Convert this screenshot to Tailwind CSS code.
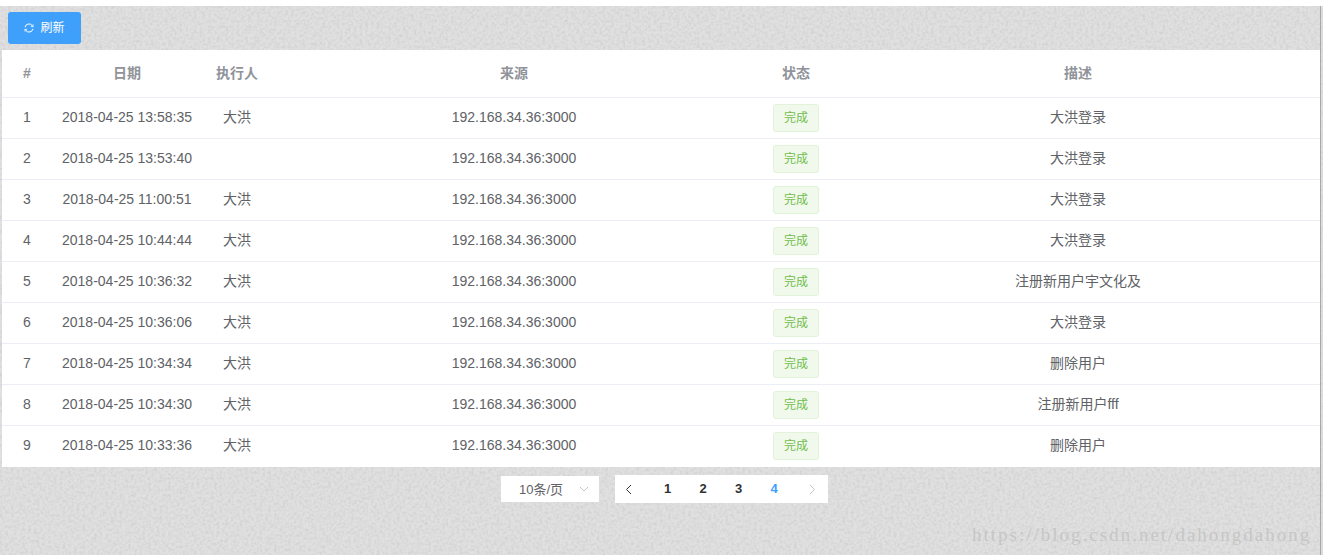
<!doctype html>
<html lang="zh">
    <head>
        <meta charset="UTF-8" />
        <title>操作日志</title>
        <script src="https://cdn.jsdelivr.net/npm/@tailwindcss/browser@4"></script>
    </head>
    <body class="bg-white font-['Liberation_Sans','Noto_Sans_CJK_SC',sans-serif]">
        <main class="relative mt-[6px] h-[549px] w-[1323px] overflow-hidden bg-[#e0e0e0]">
            <!-- paper texture -->
            <svg class="absolute inset-0" width="1323" height="549">
                <filter id="paper" x="0" y="0" width="100%" height="100%">
                    <feTurbulence type="fractalNoise" baseFrequency="0.35" numOctaves="4" seed="4" />
                    <feColorMatrix type="matrix" values="0 0 0 0 0.55  0 0 0 0 0.55  0 0 0 0 0.55  1.1 0 0 0 -0.42" />
                </filter>
                <rect width="1323" height="549" filter="url(#paper)" />
            </svg>

            <div class="relative">
                <div class="h-[44px] pl-2 pt-[6px]">
                    <button class="flex h-[32px] w-[73px] items-center justify-center gap-[6px] rounded-[3px] bg-[#3fa0fb] text-[12px] text-white">
                        <svg width="10" height="10" viewBox="0 0 10 10" fill="none" stroke="white" stroke-width="1">
                            <path d="M1 4.2A4 4 0 0 1 8.2 2.6L9 3.6M9 5.8A4 4 0 0 1 1.8 7.4L1 6.4" />
                            <path d="M9 1.4V3.6H6.9M1 8.6V6.4H3.1" stroke-width="0.8" />
                        </svg>
                        刷新
                    </button>
                </div>

                <table id="logs" class="ml-[2px] w-[1318px] table-fixed border-collapse bg-white text-center text-[14px] text-[#606266]">
                    <colgroup>
                        <col class="w-[50px]" />
                        <col class="w-[150px]" />
                        <col class="w-[70px]" />
                        <col class="w-[484px]" />
                        <col class="w-[80px]" />
                        <col />
                    </colgroup>
                    <thead class="text-[14px] font-bold text-[#909399]">
                        <tr class="h-[47px] border-b border-[#ebeef5]">
                            <th>#</th>
                            <th>日期</th>
                            <th>执行人</th>
                            <th>来源</th>
                            <th>状态</th>
                            <th>描述</th>
                        </tr>
                    </thead>
                    <tbody>
                        <tr class="h-[41px] border-b border-[#ebeef5]"><td>1</td><td>2018-04-25 13:58:35</td><td>大洪</td><td>192.168.34.36:3000</td><td><span class="mx-auto flex h-[28px] w-[46px] items-center justify-center rounded-[3px] border border-[#e1f3d8] bg-[#f0f9eb] text-[12px] text-[#72bd4b]">完成</span></td><td>大洪登录</td></tr>
                        <tr class="h-[41px] border-b border-[#ebeef5]"><td>2</td><td>2018-04-25 13:53:40</td><td></td><td>192.168.34.36:3000</td><td><span class="mx-auto flex h-[28px] w-[46px] items-center justify-center rounded-[3px] border border-[#e1f3d8] bg-[#f0f9eb] text-[12px] text-[#72bd4b]">完成</span></td><td>大洪登录</td></tr>
                        <tr class="h-[41px] border-b border-[#ebeef5]"><td>3</td><td>2018-04-25 11:00:51</td><td>大洪</td><td>192.168.34.36:3000</td><td><span class="mx-auto flex h-[28px] w-[46px] items-center justify-center rounded-[3px] border border-[#e1f3d8] bg-[#f0f9eb] text-[12px] text-[#72bd4b]">完成</span></td><td>大洪登录</td></tr>
                        <tr class="h-[41px] border-b border-[#ebeef5]"><td>4</td><td>2018-04-25 10:44:44</td><td>大洪</td><td>192.168.34.36:3000</td><td><span class="mx-auto flex h-[28px] w-[46px] items-center justify-center rounded-[3px] border border-[#e1f3d8] bg-[#f0f9eb] text-[12px] text-[#72bd4b]">完成</span></td><td>大洪登录</td></tr>
                        <tr class="h-[41px] border-b border-[#ebeef5]"><td>5</td><td>2018-04-25 10:36:32</td><td>大洪</td><td>192.168.34.36:3000</td><td><span class="mx-auto flex h-[28px] w-[46px] items-center justify-center rounded-[3px] border border-[#e1f3d8] bg-[#f0f9eb] text-[12px] text-[#72bd4b]">完成</span></td><td>注册新用户宇文化及</td></tr>
                        <tr class="h-[41px] border-b border-[#ebeef5]"><td>6</td><td>2018-04-25 10:36:06</td><td>大洪</td><td>192.168.34.36:3000</td><td><span class="mx-auto flex h-[28px] w-[46px] items-center justify-center rounded-[3px] border border-[#e1f3d8] bg-[#f0f9eb] text-[12px] text-[#72bd4b]">完成</span></td><td>大洪登录</td></tr>
                        <tr class="h-[41px] border-b border-[#ebeef5]"><td>7</td><td>2018-04-25 10:34:34</td><td>大洪</td><td>192.168.34.36:3000</td><td><span class="mx-auto flex h-[28px] w-[46px] items-center justify-center rounded-[3px] border border-[#e1f3d8] bg-[#f0f9eb] text-[12px] text-[#72bd4b]">完成</span></td><td>删除用户</td></tr>
                        <tr class="h-[41px] border-b border-[#ebeef5]"><td>8</td><td>2018-04-25 10:34:30</td><td>大洪</td><td>192.168.34.36:3000</td><td><span class="mx-auto flex h-[28px] w-[46px] items-center justify-center rounded-[3px] border border-[#e1f3d8] bg-[#f0f9eb] text-[12px] text-[#72bd4b]">完成</span></td><td>注册新用户fff</td></tr>
                        <tr class="h-[41px]"><td>9</td><td>2018-04-25 10:33:36</td><td>大洪</td><td>192.168.34.36:3000</td><td><span class="mx-auto flex h-[28px] w-[46px] items-center justify-center rounded-[3px] border border-[#e1f3d8] bg-[#f0f9eb] text-[12px] text-[#72bd4b]">完成</span></td><td>删除用户</td></tr>
                        <tr class="h-px"><td colspan="6"></td></tr>
                    </tbody>
                </table>

                <div class="ml-[501px] mt-[8px] flex items-start gap-[16px]">
                    <div class="mt-px flex h-[26px] w-[98px] items-center bg-white pb-px pl-[18px] pr-[10px] text-[13px] text-[#606266]">
                        <span class="flex-1 translate-y-px">10条/页</span>
                        <svg width="10" height="6" viewBox="0 0 10 6" fill="none" stroke="#c0c4cc"><path d="M1 1l4 4 4-4" /></svg>
                    </div>
                    <div class="flex h-[28px] w-[213px] items-center bg-white text-center text-[13px] font-bold text-[#303133]">
                        <span class="flex w-[35px] justify-center pr-[9px]">
                            <svg width="7" height="11" viewBox="0 0 7 11" fill="none" stroke="#303133"><path d="M6 1L1.500 5.500 6 10" /></svg>
                        </span>
                        <span class="w-[35px]">1</span>
                        <span class="w-[36px]">2</span>
                        <span class="w-[35px]">3</span>
                        <span class="w-[36px] text-[#409eff]">4</span>
                        <span class="flex w-[36px] justify-center pl-[4px]">
                            <svg width="7" height="11" viewBox="0 0 7 11" fill="none" stroke="#c0c4cc"><path d="M1 1l4.500 4.500L1 10" /></svg>
                        </span>
                    </div>
                </div>
            </div>

            <!-- watermark and window edge -->
            <span class="absolute left-[972px] top-[518px] font-['Liberation_Serif',serif] text-[19px] leading-[22px] tracking-[2px] whitespace-nowrap text-[#c6c6c6]">https://blog.csdn.net/dahongdahong</span>
            <div class="absolute bottom-0 right-[2px] top-[-6px] w-px bg-[#a8a8a8]"></div>
        </main>
    </body>
</html>
